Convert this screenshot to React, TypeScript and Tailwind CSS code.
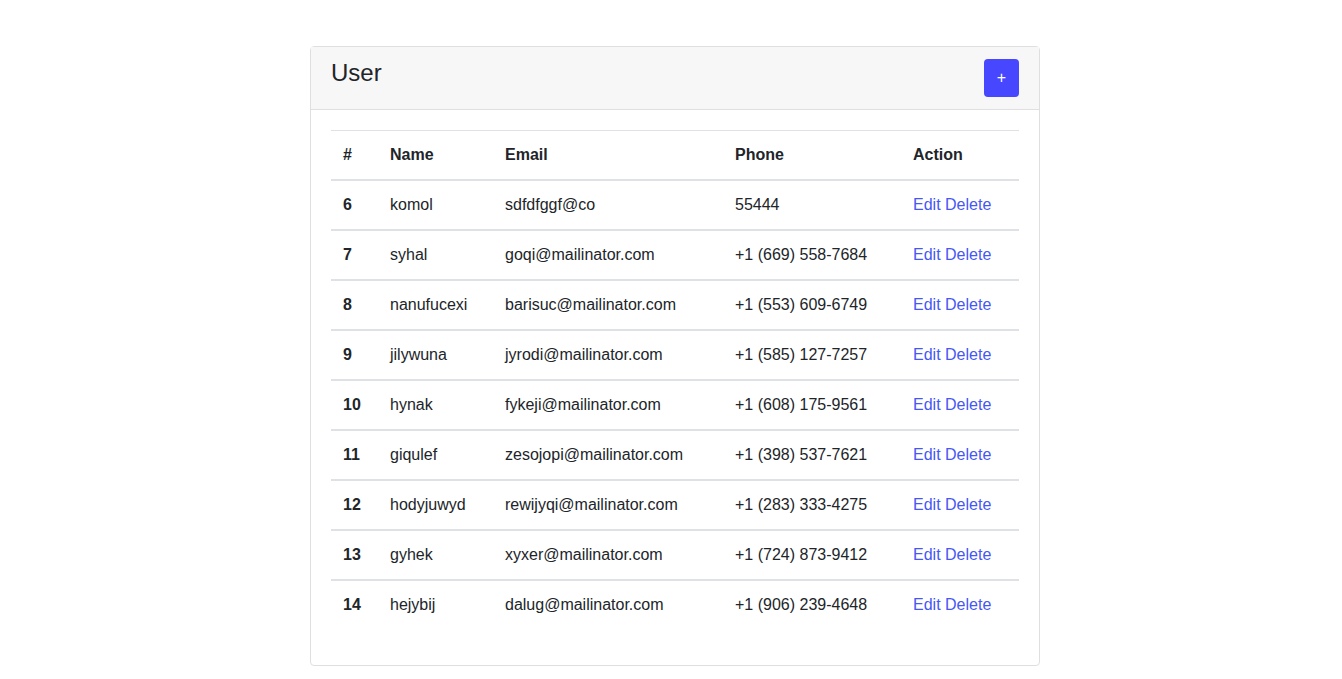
const users = [
  { id: 6, name: 'komol', email: 'sdfdfggf@co', phone: '55444' },
  { id: 7, name: 'syhal', email: 'goqi@mailinator.com', phone: '+1 (669) 558-7684' },
  { id: 8, name: 'nanufucexi', email: 'barisuc@mailinator.com', phone: '+1 (553) 609-6749' },
  { id: 9, name: 'jilywuna', email: 'jyrodi@mailinator.com', phone: '+1 (585) 127-7257' },
  { id: 10, name: 'hynak', email: 'fykeji@mailinator.com', phone: '+1 (608) 175-9561' },
  { id: 11, name: 'giqulef', email: 'zesojopi@mailinator.com', phone: '+1 (398) 537-7621' },
  { id: 12, name: 'hodyjuwyd', email: 'rewijyqi@mailinator.com', phone: '+1 (283) 333-4275' },
  { id: 13, name: 'gyhek', email: 'xyxer@mailinator.com', phone: '+1 (724) 873-9412' },
  { id: 14, name: 'hejybij', email: 'dalug@mailinator.com', phone: '+1 (906) 239-4648' },
];

export default function App(): JSX.Element {
  return (
    <div className="min-h-screen bg-white pt-[46px] font-['Liberation_Sans',Arial,sans-serif] text-base leading-6 text-[#212529]">
      <div className="ml-[310px] w-[730px] rounded border border-[#dfdfdf]">
        <div className="flex items-start justify-between border-b border-[#dfdfdf] bg-[#f7f7f7] px-5 py-3">
          <h3 className="text-2xl leading-[1.2] font-normal">User</h3>
          <button
            type="button"
            className="h-[38px] w-[35px] rounded bg-[#4747ff] text-base leading-6 text-white"
          >
            +
          </button>
        </div>

        <div className="p-5">
          <table className="mb-4 w-full border-collapse text-left">
            <thead>
              <tr className="border-t border-b-2 border-t-[#dee2e6] border-b-[#dee2e6]">
                <th className="w-[47px] px-3 py-3 font-bold">#</th>
                <th className="w-[115px] px-3 py-3 font-bold">Name</th>
                <th className="w-[230px] px-3 py-3 font-bold">Email</th>
                <th className="w-[178px] px-3 py-3 font-bold">Phone</th>
                <th className="px-3 py-3 font-bold">Action</th>
              </tr>
            </thead>
            <tbody>
              {users.map((u, i) => (
                <tr
                  key={u.id}
                  className={i < users.length - 1 ? 'border-b-2 border-[#dee2e6]' : ''}
                >
                  <th className="px-3 py-3 font-bold">{u.id}</th>
                  <td className="px-3 py-3">{u.name}</td>
                  <td className="px-3 py-3">{u.email}</td>
                  <td className="px-3 py-3">{u.phone}</td>
                  <td className="px-3 py-3 text-[#4557f5]">
                    <a href="#">Edit</a> <a href="#">Delete</a>
                  </td>
                </tr>
              ))}
            </tbody>
          </table>
        </div>
      </div>
    </div>
  );
}
